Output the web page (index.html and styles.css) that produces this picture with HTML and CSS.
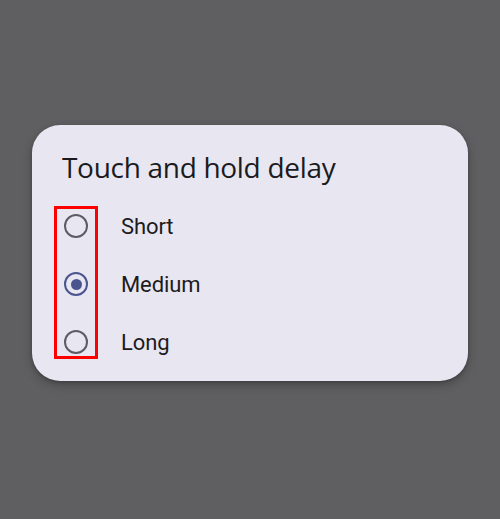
FILE: index.html
```html
<!DOCTYPE html>
<html>
<head>
<meta charset="utf-8">
<link rel="stylesheet" href="styles.css">
</head>
<body>
<div class="card">
  <h1 class="title">Touch and hold delay</h1>
  <div class="options">
    <div class="option">
      <span class="radio"></span>
      <span class="label">Short</span>
    </div>
    <div class="option">
      <span class="radio checked"></span>
      <span class="label">Medium</span>
    </div>
    <div class="option">
      <span class="radio"></span>
      <span class="label">Long</span>
    </div>
  </div>
  <div class="highlight"></div>
</div>
</body>
</html>
```
FILE: styles.css
```css
html, body {
  margin: 0;
  padding: 0;
}
body {
  background: #5f5f61;
  width: 500px;
  height: 519px;
  overflow: hidden;
  font-family: Roboto, "Noto Sans", sans-serif;
}
.card {
  position: relative;
  box-sizing: border-box;
  margin: 125px 0 0 32px;
  width: 436px;
  height: 256px;
  background: #e8e6f1;
  border-radius: 28px;
  box-shadow: 0 4px 10px rgba(0,0,0,0.25), 0 1px 3px rgba(0,0,0,0.2);
  padding: 22px 0 0 30px;
}
.title {
  margin: 0;
  font-weight: 400;
  font-size: 28px;
  line-height: 40px;
  color: #1b1b1f;
  font-family: "Open Sans", Roboto, sans-serif;
  letter-spacing: -0.3px;
}
.options {
  margin-top: 10px;
  margin-left: 2px;
  display: flex;
  flex-direction: column;
}
.option {
  height: 58px;
  display: flex;
  align-items: center;
}
.radio {
  box-sizing: border-box;
  width: 24px;
  height: 24px;
  border-radius: 50%;
  border: 2.5px solid #5d5c63;
  display: flex;
  align-items: center;
  justify-content: center;
  flex: none;
}
.radio.checked {
  border-color: #4a5590;
}
.radio.checked::after {
  content: "";
  width: 11px;
  height: 11px;
  border-radius: 50%;
  background: #4a5590;
}
.label {
  margin-left: 33px;
  font-size: 22px;
  color: #1d1b20;
  letter-spacing: -0.1px;
}
.highlight {
  position: absolute;
  left: 22px;
  top: 81px;
  width: 44px;
  height: 153px;
  box-sizing: border-box;
  border: 3px solid #ff0000;
}
```
